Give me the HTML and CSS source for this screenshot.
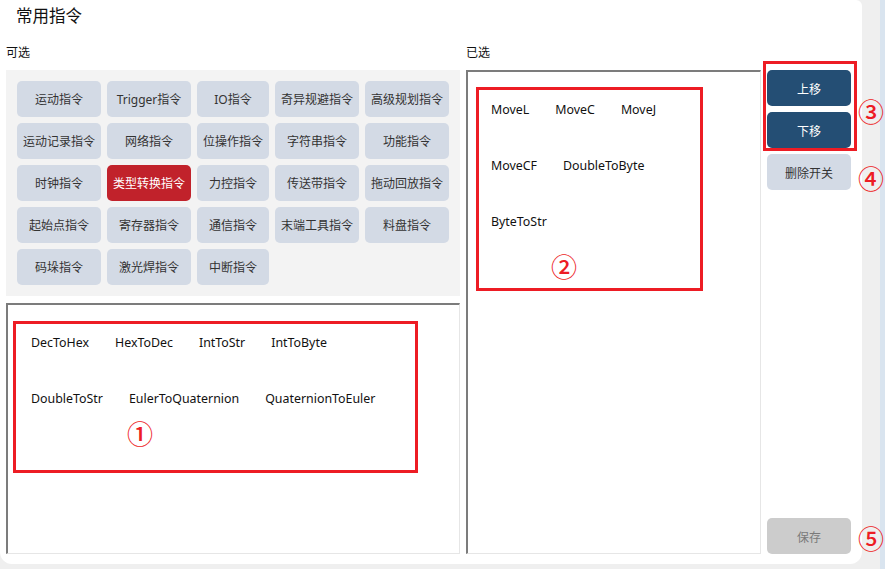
FILE: index.html
```html
<!DOCTYPE html>
<html lang="zh-CN">
<head>
  <meta charset="UTF-8" />
  <title>常用指令</title>
  <link rel="stylesheet" href="styles.css">
</head>
<body>
  <div class="screen">
    <div class="panel">
      <div class="title">常用指令</div>

      <div class="cols">
        <!-- 可选 -->
        <div class="col">
          <div class="label">可选</div>
          <div class="cat-box">
            <div class="cat">运动指令</div>
            <div class="cat">Trigger指令</div>
            <div class="cat">IO指令</div>
            <div class="cat">奇异规避指令</div>
            <div class="cat">高级规划指令</div>
            <div class="cat">运动记录指令</div>
            <div class="cat">网络指令</div>
            <div class="cat">位操作指令</div>
            <div class="cat">字符串指令</div>
            <div class="cat">功能指令</div>
            <div class="cat">时钟指令</div>
            <div class="cat active">类型转换指令</div>
            <div class="cat">力控指令</div>
            <div class="cat">传送带指令</div>
            <div class="cat">拖动回放指令</div>
            <div class="cat">起始点指令</div>
            <div class="cat">寄存器指令</div>
            <div class="cat">通信指令</div>
            <div class="cat">末端工具指令</div>
            <div class="cat">料盘指令</div>
            <div class="cat">码垛指令</div>
            <div class="cat">激光焊指令</div>
            <div class="cat">中断指令</div>
          </div>
          <div class="list-box grow">
            <div class="item-row">
              <span>DecToHex</span>
              <span>HexToDec</span>
              <span>IntToStr</span>
              <span>IntToByte</span>
            </div>
            <div class="item-row">
              <span>DoubleToStr</span>
              <span>EulerToQuaternion</span>
              <span>QuaternionToEuler</span>
            </div>
            <div class="mark mark-1"></div>
            <div class="num num-1">①</div>
          </div>
        </div>

        <!-- 已选 -->
        <div class="col">
          <div class="label">已选</div>
          <div class="list-box grow">
            <div class="item-row">
              <span>MoveL</span>
              <span>MoveC</span>
              <span>MoveJ</span>
            </div>
            <div class="item-row">
              <span>MoveCF</span>
              <span>DoubleToByte</span>
            </div>
            <div class="item-row">
              <span>ByteToStr</span>
            </div>
            <div class="mark mark-2"></div>
            <div class="num num-2">②</div>
          </div>
        </div>

        <!-- buttons -->
        <div class="col actions">
          <button class="btn dark">上移</button>
          <button class="btn dark">下移</button>
          <button class="btn light">删除开关</button>
          <button class="btn save">保存</button>
          <div class="mark mark-3"></div>
          <div class="num num-3">③</div>
          <div class="num num-4">④</div>
          <div class="num num-5">⑤</div>
        </div>
      </div>
    </div>
    <div class="strip"></div>
  </div>
</body>
</html>
```

FILE: styles.css
```css
* {
  box-sizing: border-box;
  margin: 0;
  padding: 0;
}

body {
  width: 885px;
  height: 569px;
  overflow: hidden;
  background: #efefef;
  font-family: "Noto Sans", "Noto Sans CJK SC", sans-serif;
  font-size: 12px;
  color: #222;
}

.screen {
  display: flex;
  height: 569px;
}

.panel {
  width: 862px;
  height: 564px;
  background: #ffffff;
  border-radius: 0 6px 12px 12px;
  padding-left: 6px;
}

.strip {
  width: 5px;
  margin-left: 18px;
  background: #d9e4ef;
}

.title {
  height: 30px;
  line-height: 30px;
  padding-left: 10px;
  font-size: 16.5px;
  color: #111;
  font-family: "Noto Sans CJK SC", sans-serif;
}

.cols {
  margin-top: 13px;
  height: 511px;
  display: grid;
  grid-template-columns: 454px 295px 84px;
  column-gap: 6px;
}

.col {
  display: flex;
  flex-direction: column;
  position: relative;
}

.label {
  height: 18px;
  line-height: 18px;
  margin-bottom: 9px;
  font-family: "Noto Sans CJK SC", sans-serif;
  color: #111;
}

.cat-box {
  background: #f3f3f3;
  padding: 11px;
  display: grid;
  grid-template-columns: 84px 84px 72px 84px 84px;
  grid-auto-rows: 36px;
  gap: 6px;
  margin-bottom: 7px;
}

.cat {
  background: #d3dae5;
  border-radius: 5px;
  display: flex;
  align-items: center;
  justify-content: center;
  color: #333;
  white-space: nowrap;
  font-size: 12px;
}

.cat.active {
  background: #c1222b;
  color: #ffffff;
}

.list-box {
  position: relative;
  border-top: 2px solid #7c7c7c;
  border-left: 2px solid #7c7c7c;
  border-right: 1px solid #e6e6e6;
  border-bottom: 1px solid #e6e6e6;
  padding: 28px 20px 0 23px;
  display: flex;
  flex-direction: column;
  gap: 36px;
}

.grow {
  flex: 1;
}

.item-row {
  display: flex;
  gap: 26px;
  line-height: 20px;
  font-size: 12.4px;
  color: #111;
  white-space: nowrap;
}

/* annotation frames */
.mark {
  position: absolute;
  border: 3px solid #ed1c24;
  pointer-events: none;
}

.num {
  position: absolute;
  color: #ed1c24;
  font-family: "Noto Sans CJK SC", sans-serif;
  font-size: 26px;
  font-weight: 500;
  line-height: 26px;
}

.mark-1 { left: 5px; top: 16px; width: 405px; height: 152px; }
.num-1 { left: 119px; top: 115px; }

.mark-2 { left: 8px; top: 15px; width: 227px; height: 204px; }
.num-2 { left: 83px; top: 181px; }

.mark-3 { left: -4px; top: 18px; width: 94px; height: 90px; }
.num-3 { left: 91px; top: 55px; }
.num-4 { left: 91px; top: 122px; }
.num-5 { left: 91px; top: 482px; }

.actions {
  padding-top: 27px;
  gap: 6px;
}

.btn {
  height: 36px;
  width: 84px;
  border: none;
  border-radius: 5px;
  font-family: "Noto Sans CJK SC", sans-serif;
  font-size: 12px;
}

.btn.dark {
  background: #244e74;
  color: #ffffff;
}

.btn.light {
  background: #d3dae5;
  color: #333;
}

.btn.save {
  margin-top: auto;
  background: #cccccc;
  color: #7a7a7a;
}
```
